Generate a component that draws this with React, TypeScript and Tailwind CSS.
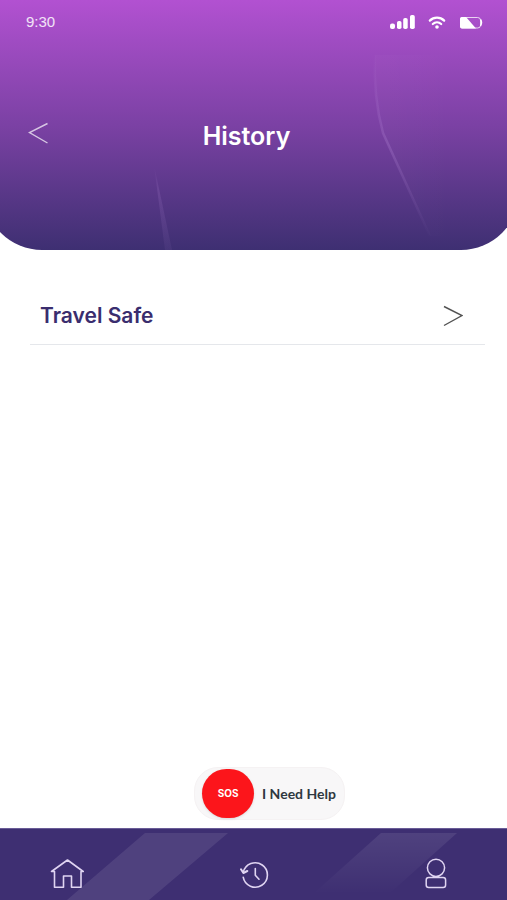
function StatusIcons() {
  return (
    <div className="flex items-center text-white">
      <svg className="h-4 w-[25px]" viewBox="0 0 25 16" fill="currentColor" aria-hidden="true">
        <rect x="0" y="9.5" width="5" height="5.5" rx="2" />
        <rect x="7" y="7" width="4.5" height="8" rx="1.8" />
        <rect x="13.2" y="4" width="4.5" height="11" rx="1.8" />
        <rect x="20" y="1" width="4.8" height="14" rx="1.8" />
      </svg>
      <svg
        className="ml-3 h-4 w-5"
        viewBox="0 0 20 16"
        fill="none"
        stroke="currentColor"
        strokeWidth="2.2"
        strokeLinecap="round"
        aria-hidden="true"
      >
        <path d="M2.8 6.6C6.8 2.6 13.2 2.6 17.2 6.6" />
        <path d="M5.8 10C8.2 7.8 11.8 7.8 14.2 10" />
        <circle cx="10" cy="13" r="1.8" fill="currentColor" stroke="none" />
      </svg>
      <svg className="ml-3 h-4 w-6" viewBox="0 0 24 16" fill="none" aria-hidden="true">
        <path
          d="M3 3.5H18.5Q21.5 3.5 21.5 6V11.5Q21.5 14 18.5 14H3Q1.5 14 1.5 12.5V5Q1.5 3.5 3 3.5Z"
          stroke="currentColor"
          strokeOpacity=".75"
        />
        <path d="M3 3H7L17 14.5H3Q1 14.5 1 12.5V5Q1 3 3 3Z" fill="currentColor" />
        <path d="M21.5 5.5Q23.5 8.5 21.5 12" stroke="currentColor" strokeWidth="1.5" />
      </svg>
    </div>
  );
}

function Header() {
  return (
    // Wider than the screen, so the rounded corners are cut off at its edges
    <header className="relative -mr-3 -ml-4 h-[250px] overflow-hidden rounded-b-[58px] bg-linear-to-b from-[#b251d1] via-[#7b41a4] to-[#3e2f72] pr-3 pl-4">
      <svg
        className="absolute inset-0 h-full w-full"
        viewBox="0 0 535 250"
        preserveAspectRatio="none"
        aria-hidden="true"
      >
        <defs>
          <linearGradient id="beam-line" gradientUnits="userSpaceOnUse" x1="0" x2="0" y1="50" y2="240">
            <stop offset="0" stopColor="#c79be8" stopOpacity="0" />
            <stop offset=".5" stopColor="#c79be8" stopOpacity=".22" />
            <stop offset="1" stopColor="#c79be8" stopOpacity="0" />
          </linearGradient>
          <linearGradient id="beam-glow" gradientUnits="userSpaceOnUse" x1="390" x2="470" y1="0" y2="0">
            <stop offset="0" stopColor="#fff" stopOpacity=".02" />
            <stop offset="1" stopColor="#fff" stopOpacity="0" />
          </linearGradient>
          <linearGradient id="beam-left" gradientUnits="userSpaceOnUse" x1="0" x2="0" y1="165" y2="250">
            <stop offset="0" stopColor="#c79be8" stopOpacity="0" />
            <stop offset=".3" stopColor="#c79be8" stopOpacity=".14" />
            <stop offset="1" stopColor="#c79be8" stopOpacity=".06" />
          </linearGradient>
        </defs>
        <path d="M170 165 188 250H181Z" fill="url(#beam-left)" />
        <path d="M391 55Q389 96 399 133L446 236H490V55Z" fill="url(#beam-glow)" />
        <path d="M391 55Q389 96 399 133L446 236" fill="none" stroke="url(#beam-line)" strokeWidth="2.5" />
      </svg>

      <div className="relative flex items-center justify-between pt-3 pr-6 pl-[26px]">
        <span className="font-['Liberation_Sans',sans-serif] text-[15px] leading-5 text-white/85">9:30</span>
        <StatusIcons />
      </div>

      <div className="relative grid grid-cols-[48px_1fr_48px] items-center pt-[84px] pr-[14px]">
        <button type="button" aria-label="Back" className="ml-7 h-10 w-5">
          <svg
            className="h-10 w-5 text-white/70"
            viewBox="0 0 20 40"
            fill="none"
            stroke="currentColor"
            strokeWidth="1.4"
            aria-hidden="true"
          >
            <path d="M19.5 7.5 1.5 16.5 19.5 27" />
          </svg>
        </button>
        <h1 className="text-center text-[25px] leading-10 font-semibold text-white">History</h1>
      </div>
    </header>
  );
}

function BottomNav() {
  return (
    <nav className="relative overflow-hidden border-t border-[#695c97] bg-[#3e2f72]">
      <svg
        className="absolute inset-0 h-full w-full"
        viewBox="0 0 507 72"
        preserveAspectRatio="none"
        aria-hidden="true"
      >
        <defs>
          <linearGradient id="nav-fade" x1="0" x2="0" y1="0" y2="1">
            <stop offset="0" stopColor="#fff" stopOpacity=".09" />
            <stop offset="1" stopColor="#fff" stopOpacity="0" />
          </linearGradient>
        </defs>
        <path d="M145 4H228L149 72H67Z" fill="#fff" fillOpacity=".09" />
        <path d="M381 4H457L389 66H313Z" fill="url(#nav-fade)" />
      </svg>

      <div className="relative flex items-center justify-between pt-[29px] pr-[60px] pb-[10px] pl-[50px] text-[#e0d5f2]">
        <a href="#home" aria-label="Home">
          <svg
            className="h-8 w-[34px]"
            viewBox="0 0 34 32"
            fill="none"
            stroke="currentColor"
            strokeWidth="1.6"
            strokeLinejoin="round"
            strokeLinecap="round"
            aria-hidden="true"
          >
            <path d="M1.5 13.5 17.5 2 33.2 13.5H31V29.2H21.5V18H13.5V29.2H4.5V13.5Z" />
          </svg>
        </a>
        <a href="#history" aria-label="History">
          <svg
            className="h-8 w-[29px]"
            viewBox="0 0 29 32"
            fill="none"
            stroke="currentColor"
            strokeWidth="1.6"
            strokeLinecap="round"
            strokeLinejoin="round"
            aria-hidden="true"
          >
            <path d="M3.3 14.3A12.2 12.2 0 1 1 3.2 19.2" />
            <path d="M1 11.3 3.4 15 7.3 13" strokeWidth="2" />
            <path d="M15.3 10.5V17.3L19 21.2" />
          </svg>
        </a>
        <a href="#profile" aria-label="Profile">
          <svg
            className="h-8 w-[22px]"
            viewBox="0 0 22 32"
            fill="none"
            stroke="currentColor"
            strokeWidth="1.5"
            aria-hidden="true"
          >
            <circle cx="11" cy="9.8" r="8.6" />
            <rect x="1.2" y="19.6" width="19.4" height="9.8" rx="2.5" />
          </svg>
        </a>
      </div>
    </nav>
  );
}

export default function App() {
  return (
    <div className="flex min-h-screen flex-col overflow-x-hidden bg-white font-[Inter,sans-serif]">
      <Header />

      <main className="flex flex-1 flex-col">
        <a
          href="#travel-safe"
          className="mr-[22px] ml-[30px] flex items-center justify-between border-b border-gray-200 pt-[46px] pr-[22px] pb-2 pl-[10px]"
        >
          <span className="text-[21px] leading-10 font-semibold text-[#3a2d6e]">Travel Safe</span>
          <svg
            className="h-6 w-5 text-neutral-600"
            viewBox="0 0 20 24"
            fill="none"
            stroke="currentColor"
            strokeWidth="1.4"
            aria-hidden="true"
          >
            <path d="M1 2.5 19 11.5 1 21.5" />
          </svg>
        </a>

        <div className="mt-auto flex justify-center pb-2 pl-8">
          <button
            type="button"
            className="flex items-center gap-2 rounded-3xl border border-[#f5f2f3] bg-[#f8f7f8] py-px pr-2 pl-[7px]"
          >
            <span className="grid h-[49px] w-[52px] place-items-center rounded-full bg-[#fc151b] text-[10px] font-bold text-white shadow-sm">
              SOS
            </span>
            <span className="font-[Lato,sans-serif] text-[14px] leading-5 font-bold text-[#2e3840]">
              I Need Help
            </span>
          </button>
        </div>
      </main>

      <BottomNav />
    </div>
  );
}
